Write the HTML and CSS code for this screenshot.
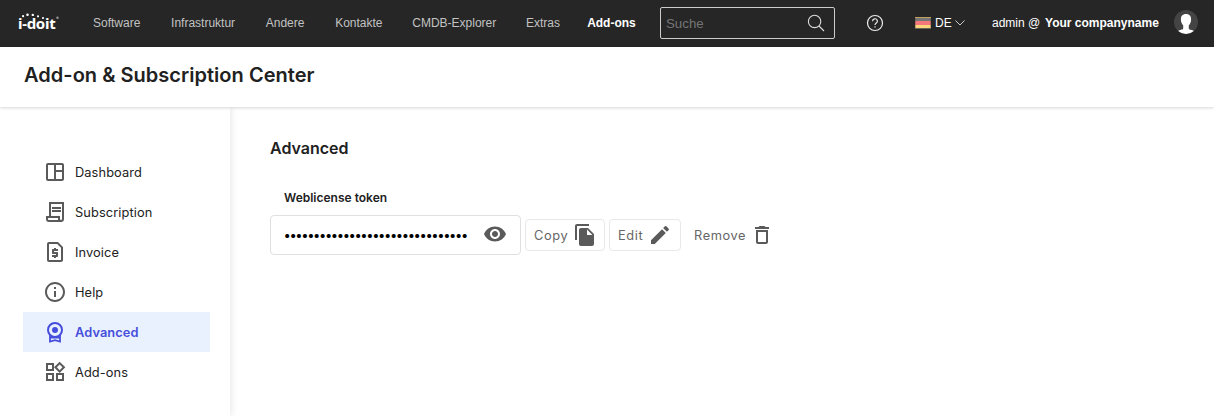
FILE: index.html
```html
<!DOCTYPE html>
<html lang="de">
<head>
<meta charset="utf-8">
<title>Add-on &amp; Subscription Center</title>
<link rel="stylesheet" href="styles.css">
</head>
<body>
<header class="topbar">
  <div class="logo">
    <svg class="logo-dots" width="44" height="12" viewBox="0 0 44 12" fill="#fff">
      <circle cx="5.100" cy="4.200" r="1.100"/><circle cx="9.500" cy="2.700" r="1.300"/><circle cx="14.800" cy="2.900" r="1.200"/><circle cx="20" cy="4.300" r="1.100"/><circle cx="25" cy="6" r="1.100"/><circle cx="39.500" cy="5.700" r="1.200" fill="#999"/>
    </svg>
    <span class="logo-text">i-doit</span>
  </div>
  <nav class="menu">
    <a>Software</a><a>Infrastruktur</a><a>Andere</a><a>Kontakte</a><a>CMDB-Explorer</a><a>Extras</a><a class="current">Add-ons</a>
  </nav>
  <div class="search">
    <span>Suche</span>
    <svg width="18" height="18" viewBox="0 0 18 18" fill="none" stroke="#ddd" stroke-width="1.1"><circle cx="7.6" cy="7.4" r="6.2"/><path d="M12 12l5 5"/></svg>
  </div>
  <svg class="help" width="18" height="18" viewBox="0 0 18 18" fill="none" stroke="#eee" stroke-width="1.2"><circle cx="9" cy="9" r="7.5"/><path d="M6.6 7.2a2.4 2.3 0 1 1 3.7 1.8C9.4 9.600 9 9.900 9 11"/><path d="M9 12.300v1.300"/></svg>
  <div class="language">
    <span class="flag"></span><span>DE</span>
    <svg width="10" height="6" viewBox="0 0 10 6" fill="none" stroke="#ccc"><path d="M.5.5L5 5 9.500.5"/></svg>
  </div>
  <div class="account">admin @ <b>Your companyname</b></div>
  <svg class="avatar" width="24" height="24" viewBox="0 0 24 24"><circle cx="12" cy="12" r="12" fill="#444"/><path fill="#fff" d="M12 4c3.600 0 5.200 2.300 5.100 5.300 0 2.700-.9 4.700-2.300 6v3.300c0 1.500 3.500 1.300 5 2.400A12 12 0 0 1 12 24a12 12 0 0 1-7.800-3c1.500-1.100 5-.9 5-2.400v-3.300c-1.400-1.300-2.300-3.300-2.300-6C6.800 6.300 8.400 4 12 4z"/></svg>
</header>
<div class="titlebar"><h1>Add-on &amp; Subscription Center</h1></div>
<div class="layout">
  <aside class="sidebar">
    <a class="item"><svg viewBox="0 0 24 24"><path d="M19 3H5c-1.100 0-2 .9-2 2v14c0 1.100.9 2 2 2h14c1.100 0 2-.9 2-2V5c0-1.100-.9-2-2-2zM5 19V5h6v14H5zm14 0h-6v-7h6v7zm0-9h-6V5h6v5z"/></svg>Dashboard</a>
    <a class="item"><svg viewBox="0 0 24 24"><path fill-rule="evenodd" d="M6 2h15v17a3 3 0 0 1-3 3H6a3 3 0 0 1-3-3v-3h3V2zm2 2v12h9v3a1 1 0 0 0 2 0V4H8zM5 18v1a1 1 0 0 0 1 1h9v-2H5zM9 7h9v2H9zM9 10h9v2H9z"/></svg>Subscription</a>
    <a class="item"><svg viewBox="0 0 24 24"><path d="M14 2H6c-1.100 0-2 .9-2 2v16c0 1.100.89 2 1.990 2H18c1.100 0 2-.9 2-2V7l-5-5h-1zm4 18H6V4h8.170L18 7.830V20z"/><path d="M11 18h2v-1h1c.55 0 1-.45 1-1v-3c0-.55-.45-1-1-1h-3v-1h4V9h-2V8h-2v1h-1c-.55 0-1 .45-1 1v3c0 .55.45 1 1 1h3v1H9v2h2v1z"/></svg>Invoice</a>
    <a class="item"><svg viewBox="0 0 24 24"><path d="M11 7h2v2h-2zm0 4h2v6h-2zm1-9C6.480 2 2 6.480 2 12s4.480 10 10 10 10-4.480 10-10S17.520 2 12 2zm0 18c-4.410 0-8-3.590-8-8s3.590-8 8-8 8 3.590 8 8-3.590 8-8 8z"/></svg>Help</a>
    <a class="item active"><svg viewBox="0 0 24 24"><circle cx="12" cy="10" r="7" fill="none" stroke="currentColor" stroke-width="2"/><circle cx="12" cy="10" r="3"/><path d="M7 15v6.600l5-1.500 5 1.500V15M7 17.500h10" fill="none" stroke="currentColor" stroke-width="1.800"/></svg>Advanced</a>
    <a class="item"><svg viewBox="0 0 24 24"><path d="M16.660 4.520l2.830 2.830-2.830 2.830-2.830-2.830 2.830-2.830M9 5v4H5V5h4m10 10v4h-4v-4h4M9 15v4H5v-4h4m7.660-13.310L11 7.340 16.660 13l5.660-5.660-5.660-5.650zM11 3H3v8h8V3zm10 10h-8v8h8v-8zm-10 0H3v8h8v-8z"/></svg>Add-ons</a>
  </aside>
  <main class="content">
    <h2>Advanced</h2>
    <label class="field-label">Weblicense token</label>
    <div class="token-row">
      <div class="token"><span class="dots">•••••••••••••••••••••••••••••••</span><svg viewBox="0 0 24 24"><path d="M12 4.500C7 4.500 2.730 7.610 1 12c1.730 4.390 6 7.500 11 7.500s9.270-3.110 11-7.500c-1.730-4.390-6-7.500-11-7.500zM12 17c-2.760 0-5-2.240-5-5s2.240-5 5-5 5 2.240 5 5-2.240 5-5 5zm0-8c-1.660 0-3 1.340-3 3s1.340 3 3 3 3-1.340 3-3-1.340-3-3-3z"/></svg></div>
      <button class="btn copy">Copy<svg viewBox="0 0 24 24"><path d="M16 1H4c-1.100 0-2 .9-2 2v14h2V3h12V1zm-1 4l6 6v10c0 1.100-.9 2-2 2H7.990C6.890 23 6 22.100 6 21l.01-14c0-1.100.89-2 1.990-2h7zm-1 7h5.500L14 6.500V12z"/></svg></button>
      <button class="btn edit">Edit<svg viewBox="0 0 24 24"><path d="M3 17.250V21h3.750L17.810 9.940l-3.750-3.750L3 17.250zM20.710 7.040a1 1 0 0 0 0-1.410l-2.340-2.340a1 1 0 0 0-1.410 0l-1.830 1.830 3.750 3.750 1.830-1.830z"/></svg></button>
      <button class="btn remove">Remove<svg viewBox="0 0 24 24"><path d="M6 19c0 1.100.9 2 2 2h8c1.100 0 2-.9 2-2V7H6v12zM8 9h8v10H8V9zm7.500-5l-1-1h-5l-1 1H5v2h14V4h-3.500z"/></svg></button>
    </div>
  </main>
</div>
</body>
</html>
```
FILE: styles.css
```css
* { box-sizing: border-box; }
body { margin: 0; height: 416px; overflow: hidden; display: flex; flex-direction: column; background: #fff; color: #212121; font-family: Inter, sans-serif; }
.topbar { flex: none; height: 47px; background: #262626; display: flex; align-items: center; padding: 0 16px 2px 18px; font: 12px "Liberation Sans", Arial, sans-serif; color: #fff; white-space: nowrap; }
.logo { position: relative; width: 75px; height: 22px; flex: none; }
.logo-dots { position: absolute; left: 0; top: 0; }
.logo-text { display: block; padding-top: 2px; font: 700 15px/19px "Noto Sans", sans-serif; letter-spacing: -0.300px; }
.menu { display: flex; width: 567px; flex: none; gap: 30.700px; color: #c2c2c2; }
.menu a:nth-child(n+5) { margin-left: -1px; }
.menu .current { color: #fff; font-weight: 700; margin-left: -4px; }
.menu a.current { margin-left: -3.500px; }
.search { flex: none; width: 175px; height: 32px; border: 1px solid #ccc; border-radius: 2px; display: flex; align-items: center; justify-content: space-between; padding: 0 9px 0 5px; font-size: 13.300px; color: #757575; }
.search span { padding-top: 2px; }
.help { flex: none; margin-left: 31px; }
.language { flex: none; display: flex; align-items: center; width: 77px; margin-left: 31px; }
.flag { width: 16px; height: 12px; margin-right: 4px; border: 1px solid rgba(80, 70, 50, .35); background: linear-gradient(#757575 0 33%, #f4777c 33% 67%, #fbd57a 67%); }
.language svg { margin-left: 3px; }
.account { flex: none; width: 182px; }
.account b { margin-left: 1.500px; }
.avatar { flex: none; position: relative; top: -1px; }
.titlebar { flex: none; height: 60px; padding: 13px 24px; position: relative; background: #fff; box-shadow: 0 1px 3px rgba(0, 0, 0, .16); }
h1 { margin: 0; font-size: 20px; line-height: 30px; font-weight: 600; letter-spacing: .03px; }
.layout { flex: 1; display: flex; }
.sidebar { width: 230px; padding: 45px 20px 0 23px; box-shadow: 0 0 8px rgba(0, 0, 0, .13); }
.item { display: flex; align-items: center; height: 40px; padding-left: 20px; font-size: 12.800px; line-height: 17px; letter-spacing: .1px; }
svg { flex: none; }
.item svg, .token svg, .btn svg { width: 24px; height: 24px; fill: #5a5a5a; }
.item svg { margin-right: 8px; }
.active { background: #e9f1ff; color: #464ddc; font-weight: 600; }
.item.active svg { fill: currentColor; }
.content { padding: 29px 40px; }
h2 { margin: 0; font-size: 16px; line-height: 24px; font-weight: 600; }
.field-label { display: block; margin: 28px 0 7px 14px; font-size: 12px; line-height: 20px; font-weight: 600; }
.token-row { display: flex; align-items: center; gap: 4px; }
.token { width: 251px; height: 40px; border: 1px solid #e0e0e0; border-radius: 4px; display: flex; align-items: center; justify-content: space-between; padding: 0 13px; }
.token svg { position: relative; top: -1px; }
.dots { color: #000; font-size: 13px; letter-spacing: -1.400px; margin-left: -.5px; }
.btn { height: 32px; border: 1px solid #e8e8e8; border-radius: 4px; background: #fff; color: #666; display: flex; align-items: center; justify-content: space-between; padding: 0 8px; font: 12.800px/17px Inter, sans-serif; letter-spacing: .6px; }
.copy { width: 80px; padding-right: 7px; }
.edit { width: 72px; }
.remove { width: 94px; padding-right: 4px; border-color: transparent; }
```
